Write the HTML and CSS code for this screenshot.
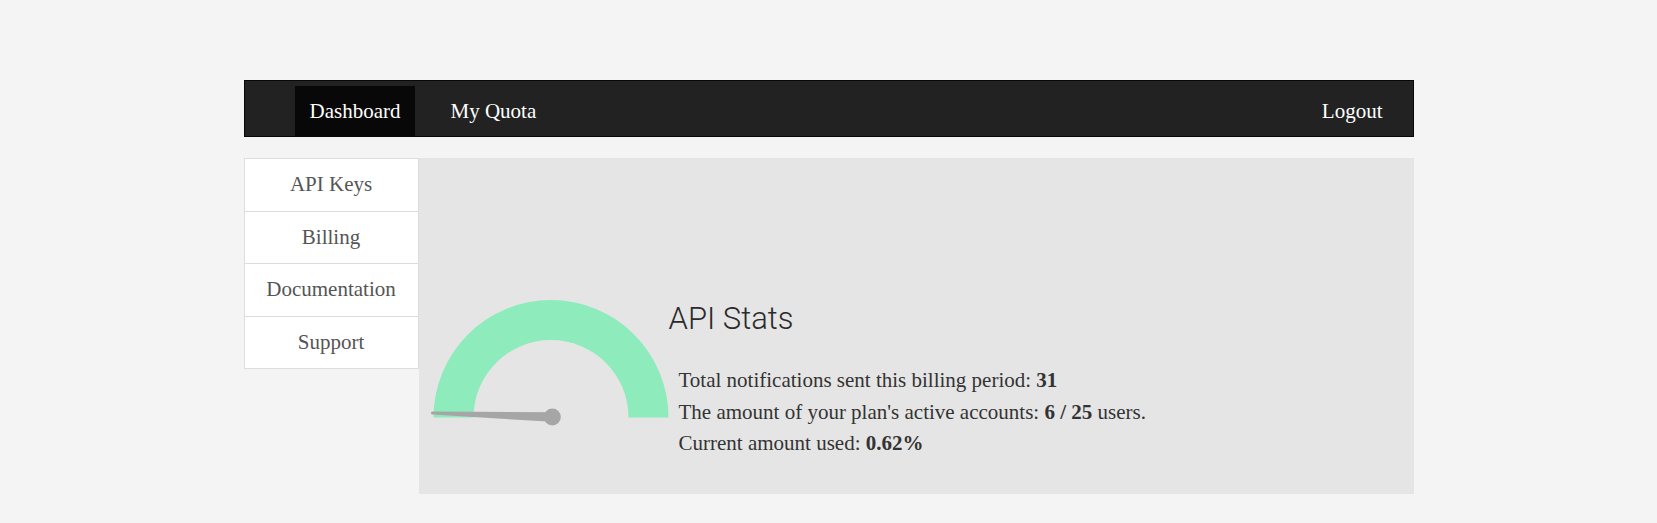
FILE: index.html
```html
<!DOCTYPE html>
<html>
<head>
<meta charset="utf-8">
<title>Dashboard</title>
<link rel="stylesheet" href="styles.css">
</head>
<body>
<div class="container">
  <nav class="navbar">
    <ul class="nav-left">
      <li class="nav-item active">Dashboard</li>
      <li class="nav-item quota">My Quota</li>
    </ul>
    <ul class="nav-right">
      <li class="nav-item">Logout</li>
    </ul>
  </nav>
  <div class="content">
    <ul class="sidebar">
      <li class="side-item">API Keys</li>
      <li class="side-item">Billing</li>
      <li class="side-item">Documentation</li>
      <li class="side-item">Support</li>
    </ul>
    <main class="panel">
      <svg class="gauge" width="250" height="128" viewBox="0 0 250 128">
        <path d="M 14.5 118.5 A 117.5 117.5 0 0 1 249.5 118.5 L 209.5 118.5 A 77.5 77.5 0 0 0 54.5 118.5 Z" fill="#8eebbb"/>
        <path d="M 133.45 113.2 L 13.55 112.4 A 1.6 1.6 0 0 0 13.45 115.6 L 133.15 122.8 Z" fill="#a6a6a6"/>
        <circle cx="133.3" cy="118" r="8.5" fill="#a6a6a6"/>
      </svg>
      <div class="stats">
        <h2 class="stats-title">API Stats</h2>
        <p class="stat">Total notifications sent this billing period: <b>31</b></p>
        <p class="stat">The amount of your plan's active accounts: <b>6 / 25</b> users.</p>
        <p class="stat">Current amount used: <b>0.62%</b></p>
      </div>
    </main>
  </div>
</div>
</body>
</html>
```
FILE: styles.css
```css
* { box-sizing: border-box; }
html, body { margin: 0; padding: 0; }
body {
  background: #f4f4f4;
  font-family: "Liberation Serif", "Times New Roman", serif;
  font-size: 21px;
  color: #333;
}
.container {
  width: 1170px;
  margin: 80px auto 0;
}
.navbar {
  display: flex;
  justify-content: space-between;
  background: #222;
  border: 1px solid #080808;
  height: 57px;
  padding: 5px 0 0 50px;
}
.nav-left, .nav-right {
  list-style: none;
  margin: 0;
  padding: 0;
  display: flex;
}
.nav-right { padding-right: 15px; }
.nav-item {
  color: #fff;
  height: 50px;
  padding: 15px 15px 15px;
  line-height: 20px;
}
.nav-item.active { background: #080808; }
.nav-item.quota { margin-left: 20px; }
.content {
  display: flex;
  margin-top: 21px;
}
.sidebar {
  list-style: none;
  margin: 0;
  padding: 0;
  width: 175px;
  flex: none;
  align-self: flex-start;
}
.side-item {
  background: #fff;
  border: 1px solid #ddd;
  margin-bottom: -1px;
  padding: 10px 15px;
  line-height: 1.5;
  text-align: center;
  color: #555;
}
.panel {
  flex: 1;
  background: #e5e5e5;
  height: 336px;
  padding-top: 141px;
  display: flex;
  align-items: flex-start;
}
.gauge { flex: none; display: block; }
.stats { flex: none; margin-top: 1px; }
.stats-title {
  font-family: Roboto, "Liberation Sans", sans-serif;
  font-weight: 300;
  font-size: 31px;
  line-height: 38px;
  color: #2b2b2b;
  margin: 0;
}
.stat {
  margin: 0 0 0 10px;
  line-height: 1.5;
}
.stats-title + .stat { margin-top: 27px; }
```
